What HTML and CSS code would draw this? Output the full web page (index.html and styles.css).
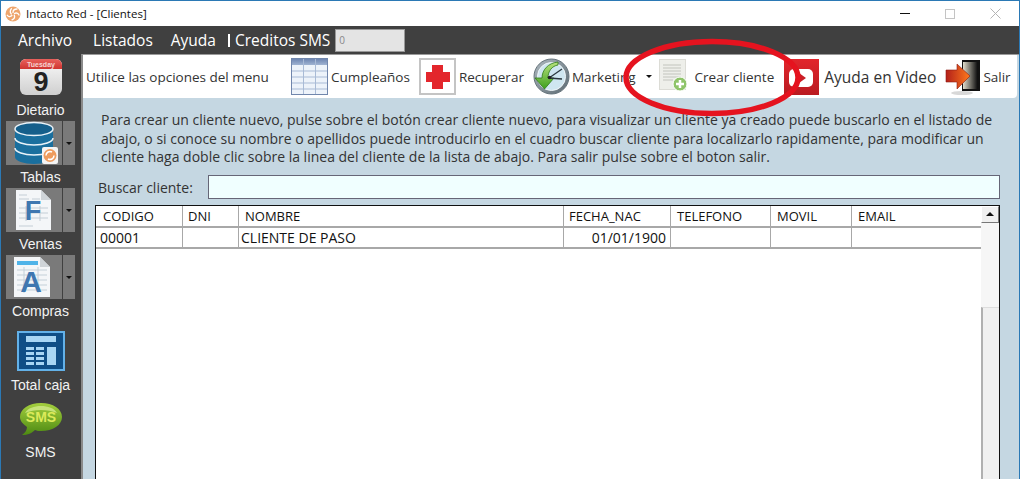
FILE: index.html

```html
<!DOCTYPE html>
<html>
<head>
  <title>Intacto Red - [Clientes]</title>
  <link rel="stylesheet" href="styles.css">
</head>
<body>
  <div class="window">
    <div class="titlebar">
      <svg class="app-logo" width="16" height="16" viewBox="0 0 16 16">
        <circle cx="8" cy="8" r="7.5" fill="#eea56c"/>
        <g fill="none" stroke="#fff" stroke-width="1.300" stroke-linecap="round">
          <path d="M8 6.500C8 4.500 9.500 3 12 3"/>
          <path d="M9.500 7.500C11 6.500 13 7 14 9"/>
          <path d="M9.300 9.200C10 11 9 13 7 13.800"/>
          <path d="M7 9.600C5.500 11 3.500 10.800 2.300 9.300"/>
          <path d="M6.300 8C5 6.500 5 4.500 6.500 2.700"/>
        </g>
      </svg>
      <span class="title-text">Intacto Red - [Clientes]</span>
      <div class="win-controls">
        <span class="win-btn win-min"></span>
        <span class="win-btn win-max"></span>
        <svg class="win-btn" width="11" height="11" viewBox="0 0 11 11"><path d="M.5.5l10 10M10.500.5l-10 10" stroke="#b4b4b4" fill="none"/></svg>
      </div>
    </div>

    <div class="menubar">
      <span class="menu-item menu-archivo">Archivo</span>
      <span class="menu-item menu-listados">Listados</span>
      <span class="menu-item menu-ayuda">Ayuda</span>
      <span class="menu-sep"></span>
      <span class="menu-item menu-creditos">Creditos SMS</span>
      <div class="credit-box">0</div>
    </div>

    <div class="workspace">
      <aside class="sidebar">
        <div class="side-item side-dietario">
          <svg width="44" height="38" viewBox="0 0 44 38">
            <defs>
              <linearGradient id="calBody" x1="0" y1="0" x2="0" y2="1"><stop offset="0" stop-color="#fafafa"/><stop offset="1" stop-color="#cfcfcf"/></linearGradient>
              <linearGradient id="calTop" x1="0" y1="0" x2="0" y2="1"><stop offset="0" stop-color="#e8615c"/><stop offset="1" stop-color="#cf3531"/></linearGradient>
            </defs>
            <rect x="1" y="1" width="42" height="36" rx="6" fill="url(#calBody)"/>
            <path d="M1 11V7a6 6 0 0 1 6-6h30a6 6 0 0 1 6 6v4z" fill="url(#calTop)"/>
            <text x="22" y="8.500" class="cal-day">Tuesday</text>
            <text x="22" y="33" class="cal-num">9</text>
          </svg>
          <span class="side-label">Dietario</span>
        </div>

        <div class="side-item side-split">
          <div class="split-btn">
            <div class="split-main">
              <svg width="48" height="44" viewBox="0 0 48 44">
                <path d="M5 8v28c0 4 9 7 19 7s19-3 19-7V8z" fill="#1a6f9e"/>
                <ellipse cx="24" cy="8" rx="19" ry="6.500" fill="#155f8b" stroke="#e8f2f8" stroke-width="1.500"/>
                <path d="M5 17c0 4 9 7 19 7s19-3 19-7M5 27c0 4 9 7 19 7s19-3 19-7" fill="none" stroke="#e8f2f8" stroke-width="1.500"/>
                <rect x="32" y="26" width="16" height="17" rx="2" fill="#f4f4f4"/>
                <circle cx="40" cy="34.500" r="6.500" fill="#ee9c5e"/>
                <path d="M36 34.500a4 4 0 0 1 6-3.500M44 34.500a4 4 0 0 1-6 3.500" stroke="#fff" stroke-width="1.500" fill="none"/>
              </svg>
            </div>
            <div class="split-arrow"><span class="caret"></span></div>
          </div>
          <span class="side-label">Tablas</span>
        </div>

        <div class="side-item side-split">
          <div class="split-btn">
            <div class="split-main">
              <svg width="48" height="44" viewBox="0 0 48 44">
                <path d="M6 2h25l10 10v30H6z" fill="#f4f6f8"/>
                <path d="M31 2l10 10H31z" fill="#cfd4d8"/>
                <path d="M9 7h8M9 11h10M22 11h8M9 20h29M9 25h29M9 30h29M9 38h14M16 18v15M30 18v15" stroke="#c4ced6" fill="none"/>
                <text x="23" y="32" class="doc-letter doc-f">F</text>
              </svg>
            </div>
            <div class="split-arrow"><span class="caret"></span></div>
          </div>
          <span class="side-label">Ventas</span>
        </div>

        <div class="side-item side-split">
          <div class="split-btn">
            <div class="split-main">
              <svg width="48" height="44" viewBox="0 0 48 44">
                <path d="M4 2h26l10 10v30H4z" fill="#f4f6f8"/>
                <path d="M30 2l10 10H30z" fill="#cfd4d8"/>
                <rect x="7" y="6" width="21" height="4" fill="#4fb3e8"/>
                <path d="M7 15h30M7 20h30M7 25h30M7 30h30M7 35h30M14 12v26M28 12v26" stroke="#c4d0d8" fill="none"/>
                <text x="21" y="37" class="doc-letter doc-a">A</text>
              </svg>
            </div>
            <div class="split-arrow"><span class="caret"></span></div>
          </div>
          <span class="side-label">Compras</span>
        </div>

        <div class="side-item side-caja">
          <svg width="48" height="40" viewBox="0 0 48 40">
            <rect x="1" y="1" width="46" height="38" fill="#0f4e86" stroke="#63b1e8" stroke-width="2"/>
            <rect x="9" y="5" width="30" height="6" fill="#a8d6f4"/>
            <path d="M9 16h8v3H9zM9 21h8v3H9zM9 26h8v3H9zM9 31h8v3H9zM19 16h8v3h-8zM19 21h8v3h-8zM19 26h8v3h-8zM19 31h8v3h-8z" fill="#a8d6f4"/>
            <rect x="30" y="16" width="9" height="18" fill="#a8d6f4"/>
          </svg>
          <span class="side-label">Total caja</span>
        </div>

        <div class="side-item side-sms">
          <svg width="44" height="34" viewBox="0 0 44 34">
            <defs>
              <linearGradient id="smsBody" x1="0" y1="0" x2="0" y2="1"><stop offset="0" stop-color="#a4cf3e"/><stop offset="1" stop-color="#4d8a12"/></linearGradient>
            </defs>
            <path d="M22 1c12 0 21 6 21 14s-9 14-21 14c-2 0-4 0-6-1-3 3-7 5-13 5 3-2 5-5 5-8C4 22 1 19 1 15 1 7 10 1 22 1z" fill="url(#smsBody)"/>
            <path d="M6 11c3-5 9-7 16-7s13 2 16 7c-5-2-10-3-16-3S11 9 6 11z" fill="#c6e27a"/>
            <text x="22" y="20" class="sms-text">SMS</text>
          </svg>
          <span class="side-label">SMS</span>
        </div>
      </aside>

      <main class="panel">
        <div class="toolbar">
          <span class="tool-hint">Utilice las opciones del menu</span>
          <div class="tool tool-cumple">
            <svg width="37" height="37" viewBox="0 0 37 37">
              <defs>
                <linearGradient id="cumpleHead" x1="0" y1="0" x2="0" y2="1"><stop offset="0" stop-color="#6e86b2"/><stop offset="1" stop-color="#9fb3d2"/></linearGradient>
              </defs>
              <rect x=".5" y=".5" width="36" height="36" fill="#edf3fa" stroke="#7086ac"/>
              <rect x="1" y="1" width="35" height="6" fill="url(#cumpleHead)"/>
              <path d="M1 13h35M1 19h35M1 25h35M1 31h35M12.500 1v35M24.500 1v35" stroke="#a9bbd6" fill="none"/>
            </svg>
            <span>Cumpleaños</span>
          </div>
          <div class="tool tool-recuperar">
            <svg width="37" height="37" viewBox="0 0 37 37">
              <rect x="1" y="1" width="35" height="35" fill="#fff" stroke="#c4c4c4" stroke-width="2"/>
              <path d="M13 7h11v7h7v10h-7v7H13v-7H7V14h6z" fill="#e3262c"/>
            </svg>
            <span>Recuperar</span>
          </div>
          <div class="tool tool-marketing">
            <svg width="37" height="37" viewBox="0 0 37 37">
              <defs>
                <linearGradient id="mkRing" x1="0" y1="0" x2="1" y2="1"><stop offset="0" stop-color="#aeb9c0"/><stop offset="1" stop-color="#5c6a72"/></linearGradient>
                <linearGradient id="mkArrow" x1="0" y1="0" x2="0" y2="1"><stop offset="0" stop-color="#b7e27c"/><stop offset="1" stop-color="#3fa01e"/></linearGradient>
              </defs>
              <circle cx="18.500" cy="18.500" r="17.500" fill="url(#mkRing)" stroke="#66747c"/>
              <circle cx="18.500" cy="18.500" r="14" fill="#cfe6f0" stroke="#f0f6f9"/>
              <path d="M25 4C15 5 9 12 9 20H2l9.500 11L21 20h-6c0-7 4-12 10-13z" fill="url(#mkArrow)" stroke="#2d7a16" stroke-width=".8"/>
              <path d="M16 20l13-9M16 20l13 1" stroke="#2b373e" stroke-width="1.300" fill="none"/>
              <circle cx="16.500" cy="19.500" r="1.800" fill="#222"/>
            </svg>
            <span>Marketing</span>
            <span class="caret caret-tool"></span>
          </div>
          <div class="tool tool-crear">
            <svg width="30" height="37" viewBox="0 0 30 37">
              <rect x="1.500" y="1.500" width="26" height="30" fill="#eeefea" stroke="#dcdcd6"/>
              <path d="M5 7h18M5 10h18M5 13h18M5 16h18M5 19h18M5 22h10" stroke="#c2c4bd" fill="none"/>
              <circle cx="22" cy="26" r="7" fill="#8fc46a" stroke="#fff"/>
              <path d="M22 22v8M18 26h8" stroke="#fff" stroke-width="2.500"/>
            </svg>
            <span>Crear cliente</span>
          </div>
          <div class="tool tool-video">
            <svg width="35" height="36" viewBox="0 0 35 36">
              <defs>
                <linearGradient id="videoBack" x1="0" y1="0" x2="0" y2="1"><stop offset="0" stop-color="#e2252c"/><stop offset="1" stop-color="#b91b21"/></linearGradient>
              </defs>
              <rect width="35" height="36" fill="url(#videoBack)"/>
              <rect x="5" y="10" width="24" height="18" rx="5" fill="#fff"/>
              <path d="M15 14l7 5-7 5z" fill="#c81f26"/>
            </svg>
            <span>Ayuda en Video</span>
          </div>
          <div class="tool tool-salir">
            <svg width="36" height="38" viewBox="0 0 36 38">
              <defs>
                <linearGradient id="doorFill" x1="0" y1="0" x2="1" y2="0"><stop offset="0" stop-color="#e0dccb"/><stop offset="1" stop-color="#151515"/></linearGradient>
                <linearGradient id="exitArrow" x1="0" y1="0" x2="1" y2="0"><stop offset="0" stop-color="#b3201a"/><stop offset="1" stop-color="#ff7a1c"/></linearGradient>
              </defs>
              <ellipse cx="17" cy="35" rx="11" ry="2" fill="#d8d8d8"/>
              <rect x="17" y="2" width="18" height="31" fill="#111"/>
              <rect x="18" y="4" width="14" height="27" fill="url(#doorFill)"/>
              <path d="M1 12h11V6l13 12-13 13v-7H1z" fill="url(#exitArrow)" stroke="#8f1c14" stroke-width=".6"/>
            </svg>
            <span>Salir</span>
          </div>
        </div>

        <div class="content">
          <p class="help-text">Para crear un cliente nuevo, pulse sobre el botón crear cliente nuevo, para visualizar un cliente ya creado puede buscarlo en el listado de<br>abajo, o si conoce su nombre o apellidos puede introducirlo en el cuadro buscar cliente para localizarlo rapidamente, para modificar un<br>cliente haga doble clic sobre la linea del cliente de la lista de abajo. Para salir pulse sobre el boton salir.</p>

          <div class="search-row">
            <label class="search-label">Buscar cliente:</label>
            <div class="search-input"></div>
          </div>

          <div class="grid-wrap">
            <div class="grid-area">
              <div class="grid-row grid-head">
                <div class="cell">CODIGO</div>
                <div class="cell">DNI</div>
                <div class="cell">NOMBRE</div>
                <div class="cell">FECHA_NAC</div>
                <div class="cell">TELEFONO</div>
                <div class="cell">MOVIL</div>
                <div class="cell">EMAIL</div>
              </div>
              <div class="grid-row grid-data">
                <div class="cell">00001</div>
                <div class="cell"></div>
                <div class="cell">CLIENTE DE PASO</div>
                <div class="cell cell-date">01/01/1900</div>
                <div class="cell"></div>
                <div class="cell"></div>
                <div class="cell"></div>
              </div>
            </div>
            <div class="scrollbar">
              <div class="scroll-up"><span class="scroll-tri"></span></div>
              <div class="scroll-track"></div>
              <div class="scroll-thumb"></div>
            </div>
          </div>
        </div>
      </main>
    </div>

    <svg class="annotation" width="192" height="84" viewBox="0 0 192 84">
      <ellipse cx="96" cy="41.500" rx="86" ry="36" fill="none" stroke="#e5131f" stroke-width="5.500"/>
    </svg>
  </div>
</body>
</html>
```

FILE: styles.css

```css
* {
  box-sizing: border-box;
}
html, body {
  margin: 0;
  height: 100%;
  overflow: hidden;
}
body {
  font-family: "Open Sans", "Noto Sans", sans-serif;
  color: #222;
}
.window {
  position: relative;
  width: 1020px;
  height: 479px;
  display: flex;
  flex-direction: column;
  border: 1px solid #2b79b5;
  border-bottom: 0;
  background: #404040;
  overflow: hidden;
}

/* title bar */
.titlebar {
  height: 25px;
  flex: none;
  display: flex;
  align-items: center;
  background: #fff;
  padding-left: 4px;
}
.app-logo {
  margin-right: 5px;
}
.title-text {
  font-size: 11.500px;
  color: #111;
}
.win-controls {
  margin-left: auto;
  display: flex;
  align-items: center;
  gap: 35px;
  padding-right: 18px;
}
.win-btn {
  display: block;
}
.win-min {
  width: 10px;
  height: 1px;
  background: #111;
}
.win-max {
  width: 10px;
  height: 10px;
  border: 1px solid #c4c4c4;
}

/* menu */
.menubar {
  height: 28px;
  flex: none;
  display: flex;
  align-items: center;
  color: #fff;
  font-size: 15.500px;
}
.menu-item {
  white-space: nowrap;
}
.menu-archivo {
  margin-left: 17px;
}
.menu-listados {
  margin-left: 21px;
}
.menu-ayuda {
  margin-left: 18px;
}
.menu-sep {
  width: 2px;
  height: 13px;
  background: #fff;
  margin-left: 12px;
  margin-right: 5px;
}
.credit-box {
  width: 70px;
  height: 23px;
  margin-left: 5px;
  padding-left: 3px;
  background: #e4e4e4;
  border: 1px solid #999;
  color: #888;
  font-size: 10px;
  line-height: 20px;
}

/* sidebar */
.workspace {
  flex: 1;
  display: flex;
  min-height: 0;
}
.sidebar {
  width: 80px;
  flex: none;
  display: flex;
  flex-direction: column;
  padding-left: 5px;
}
.side-item {
  width: 69px;
  display: flex;
  flex-direction: column;
  align-items: center;
}
.side-label {
  font-family: "Liberation Sans", Arial, sans-serif;
  font-size: 14px;
  line-height: 16px;
  color: #f2f2f2;
  white-space: nowrap;
}
.side-dietario {
  padding-top: 4px;
}
.side-dietario .side-label {
  margin-top: 6px;
}
.side-split {
  margin-top: 3px;
}
.split-btn {
  display: flex;
  gap: 1px;
  height: 44px;
  margin-bottom: 4px;
}
.split-main {
  width: 56px;
  background: #7a7a7a;
  display: flex;
  align-items: center;
  justify-content: center;
}
.split-arrow {
  width: 12px;
  background: #7a7a7a;
  display: flex;
  align-items: center;
  justify-content: center;
}
.caret {
  display: block;
  width: 0;
  height: 0;
  border-left: 3px solid transparent;
  border-right: 3px solid transparent;
  border-top: 3px solid #111;
}
.side-caja {
  margin-top: 12px;
}
.side-caja .side-label {
  margin-top: 6px;
}
.side-sms {
  margin-top: 9px;
}
.side-sms .side-label {
  margin-top: 8px;
}
.cal-day {
  font: bold 7px "Liberation Sans", Arial, sans-serif;
  fill: #f7d5d3;
  text-anchor: middle;
}
.cal-num {
  font: bold 27px "Liberation Sans", Arial, sans-serif;
  fill: #222;
  text-anchor: middle;
}
.doc-letter {
  font-family: "Liberation Sans", Arial, sans-serif;
  font-weight: bold;
  text-anchor: middle;
}
.doc-f {
  font-size: 27px;
  fill: #3f77b0;
}
.doc-a {
  font-size: 30px;
  fill: #3f77b0;
}
.sms-text {
  font: bold 14px "Liberation Sans", Arial, sans-serif;
  fill: #dcea5a;
  text-anchor: middle;
}

/* main panel */
.panel {
  flex: 1;
  min-width: 0;
  display: flex;
  flex-direction: column;
  background: #c5d7e2;
  border-top: 1px solid #9a9a9a;
  border-left: 2px solid #8a8a8a;
}
.toolbar {
  height: 43px;
  flex: none;
  display: flex;
  align-items: center;
  margin-right: 2px;
  background: #fff;
  border-radius: 0 0 4px 0;
  font-size: 13.500px;
  white-space: nowrap;
  color: #333;
}
.tool-hint {
  margin-left: 3px;
  width: 205px;
}
.tool {
  display: flex;
  align-items: center;
  gap: 3px;
}
.tool-recuperar {
  margin-left: 9px;
}
.tool-marketing {
  margin-left: 9px;
}
.tool-marketing svg {
  margin-right: -1px;
}
.caret-tool {
  margin-left: 7px;
}
.tool-crear {
  margin-left: 6px;
  gap: 7px;
}
.tool-video {
  margin-left: 10px;
  gap: 5px;
  font-size: 15.500px;
}
.tool-salir {
  margin-left: 9px;
  gap: 2px;
}

/* content */
.content {
  flex: 1;
  min-height: 0;
  display: flex;
  flex-direction: column;
  padding: 13px 19px 0 12px;
}
.help-text {
  margin: 0 0 0 6px;
  font-size: 14px;
  line-height: 18.500px;
  white-space: nowrap;
  color: #333;
}
.search-row {
  display: flex;
  align-items: center;
  height: 25px;
  margin-top: 8px;
  font-size: 14px;
  color: #333;
}
.search-label {
  width: 113px;
  padding-left: 3px;
}
.search-input {
  flex: 1;
  height: 24px;
  background: #f0ffff;
  border: 1px solid #667;
}
.grid-wrap {
  flex: 1;
  min-height: 0;
  margin-top: 5px;
  display: flex;
  background: #fff;
  border: 1px solid #111;
  border-bottom: 0;
}
.grid-area {
  flex: 1;
  min-width: 0;
}
.grid-row {
  display: grid;
  grid-template-columns: 87px 56px 325px 107px 100px 81px 1fr;
  height: 21px;
  border-bottom: 2px solid #a8a8a8;
  font-size: 14px;
  line-height: 20px;
  color: #111;
  white-space: nowrap;
}
.grid-head {
  height: 22px;
  font-size: 13px;
}
.grid-head .cell {
  padding-left: 6px;
}
.grid-head .cell:first-child {
  padding-left: 7px;
}
.grid-head .cell:nth-child(2),
.grid-head .cell:nth-child(4) {
  padding-left: 5px;
}
.cell {
  padding-left: 4px;
  border-right: 1px solid #a8a8a8;
}
.grid-data .cell:nth-child(3) {
  padding-left: 2px;
}
.cell:last-child {
  border-right: 0;
}
.grid-data .cell-date {
  padding: 0 4px 0 0;
  text-align: right;
}
.scrollbar {
  width: 18px;
  flex: none;
  display: flex;
  flex-direction: column;
  background: #f1f1f1;
}
.scroll-up {
  height: 17px;
  background: #f0f0f0;
  border: 1px solid #777;
  border-top-color: #fff;
  border-left-color: #fff;
  display: flex;
  align-items: center;
  justify-content: center;
}
.scroll-tri {
  width: 0;
  height: 0;
  border-left: 4px solid transparent;
  border-right: 4px solid transparent;
  border-bottom: 4px solid #111;
}
.scroll-track {
  height: 84px;
  background: #f6f6f6;
}
.scroll-thumb {
  flex: 1;
  background: #f0f0f0;
  border-left: 2px solid #b0b0b0;
  border-top: 1px solid #ddd;
}

/* red circle drawn over the screenshot */
.annotation {
  position: absolute;
  left: 615px;
  top: 35px;
  pointer-events: none;
}
```
